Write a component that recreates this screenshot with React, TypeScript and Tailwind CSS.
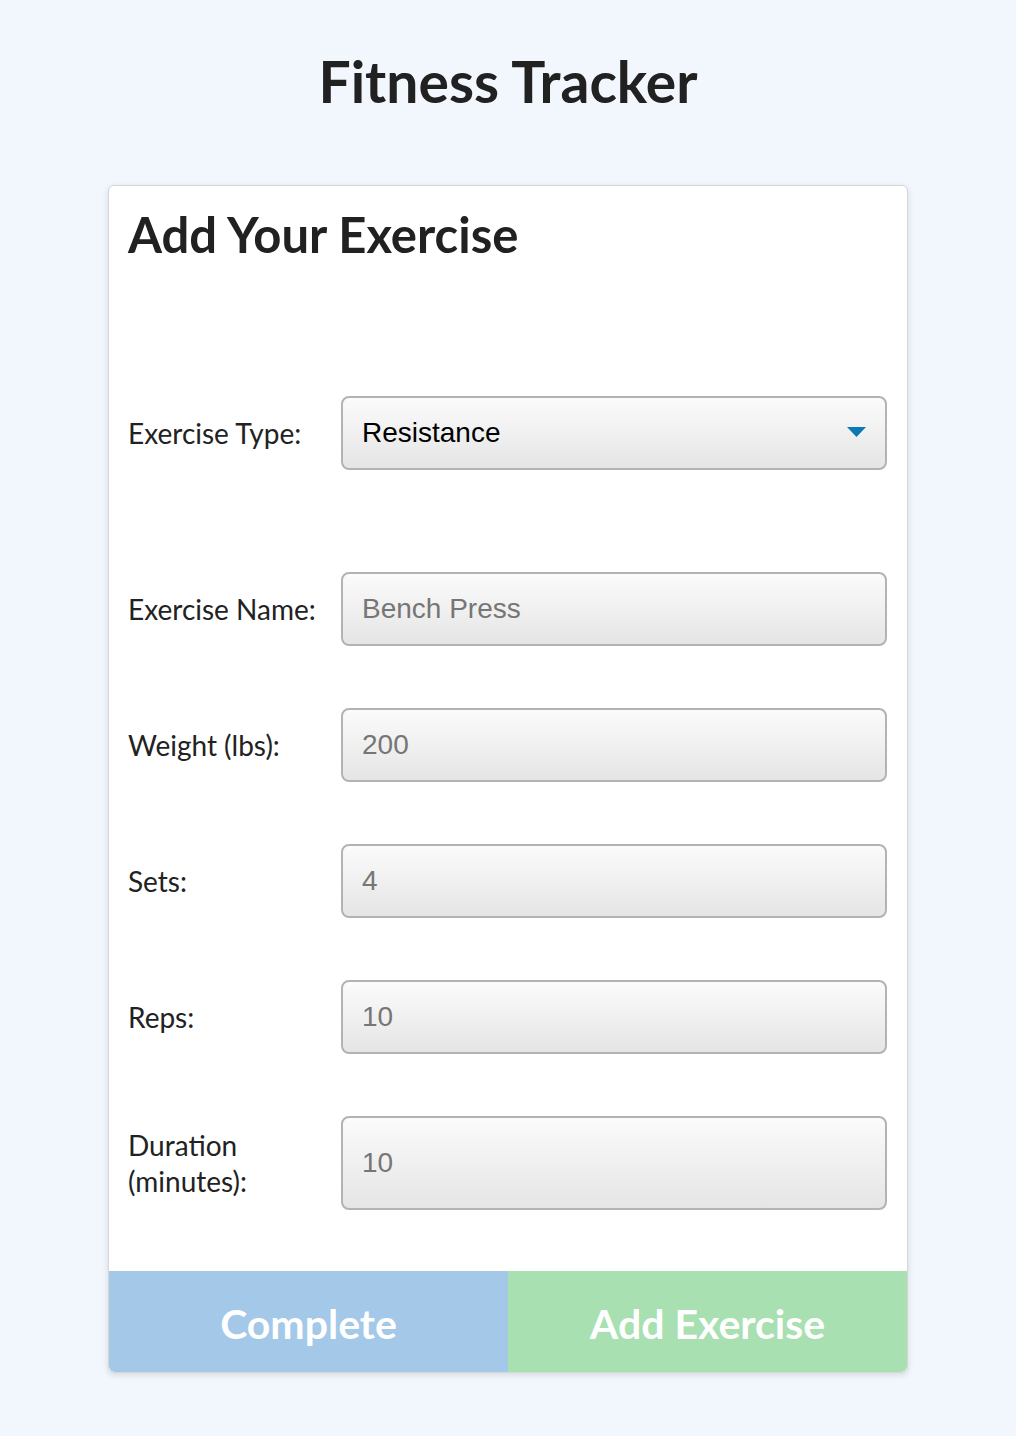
import React from 'react';

const lato = "font-['Lato','Liberation_Sans',sans-serif]";
const field =
  "w-full rounded-[8px] border-2 border-[#b3b3b3] bg-gradient-to-b from-[#fbfbfb] to-[#e5e5e5] pl-[19px] pr-4 text-[28px] text-[#111] placeholder:text-[#767676] font-['Liberation_Sans',Arial,sans-serif] outline-none";

const Row: React.FC<{ label: React.ReactNode; className?: string; children: React.ReactNode }> = ({ label, className, children }) => (
  <div className={`flex items-center ${className ?? ''}`}>
    <label className={`w-[213px] shrink-0 text-[28px] leading-[36px] text-[#222] ${lato}`}>{label}</label>
    <div className="flex-1">{children}</div>
  </div>
);

export default function App() {
  return (
    <div className={`min-h-[1436px] bg-[#f2f7fe] ${lato}`}>
      <h1 className="pt-[47px] text-center text-[57px] font-bold leading-[1.2] text-[#212121]">Fitness Tracker</h1>

      <div className="mx-auto mt-[70px] w-[800px] rounded-[6px] border border-[#d6d6d6] bg-white shadow-[0_2px_6px_rgba(0,0,0,0.12)]">
        <div className="pl-[19px] pr-[20px] pt-[19px] pb-[61px]">
          <h2 className="text-[49px] font-bold leading-[1.2] text-[#212121]">Add Your Exercise</h2>

          {/* Exercise type */}
          <Row label="Exercise Type:" className="mt-[132px]">
            <div className="relative">
              <select
                defaultValue="Resistance"
                className={`${field} h-[74px] appearance-none text-black`}
              >
                <option>Resistance</option>
                <option>Cardio</option>
              </select>
              <svg className="pointer-events-none absolute right-[21px] top-[31px]" width="19" height="10" viewBox="0 0 19 10">
                <path d="M0 0 H19 L9.5 10 Z" fill="#0a7ab3" />
              </svg>
            </div>
          </Row>

          <Row label="Exercise Name:" className="mt-[102px]">
            <input className={`${field} h-[74px]`} placeholder="Bench Press" />
          </Row>
          <Row label="Weight (lbs):" className="mt-[62px]">
            <input className={`${field} h-[74px]`} placeholder="200" />
          </Row>
          <Row label="Sets:" className="mt-[62px]">
            <input className={`${field} h-[74px]`} placeholder="4" />
          </Row>
          <Row label="Reps:" className="mt-[62px]">
            <input className={`${field} h-[74px]`} placeholder="10" />
          </Row>
          <Row label={<>Duration<br />(minutes):</>} className="mt-[62px]">
            <input className={`${field} h-[94px]`} placeholder="10" />
          </Row>
        </div>

        <div className="flex overflow-hidden rounded-b-[6px]">
          <button className="h-[101px] flex-1 bg-[#a3c8e8] pt-[4px] text-[41px] font-bold text-white">Complete</button>
          <button className="h-[101px] flex-1 bg-[#a8e0b1] pt-[4px] text-[41px] font-bold text-white">Add Exercise</button>
        </div>
      </div>
    </div>
  );
}
